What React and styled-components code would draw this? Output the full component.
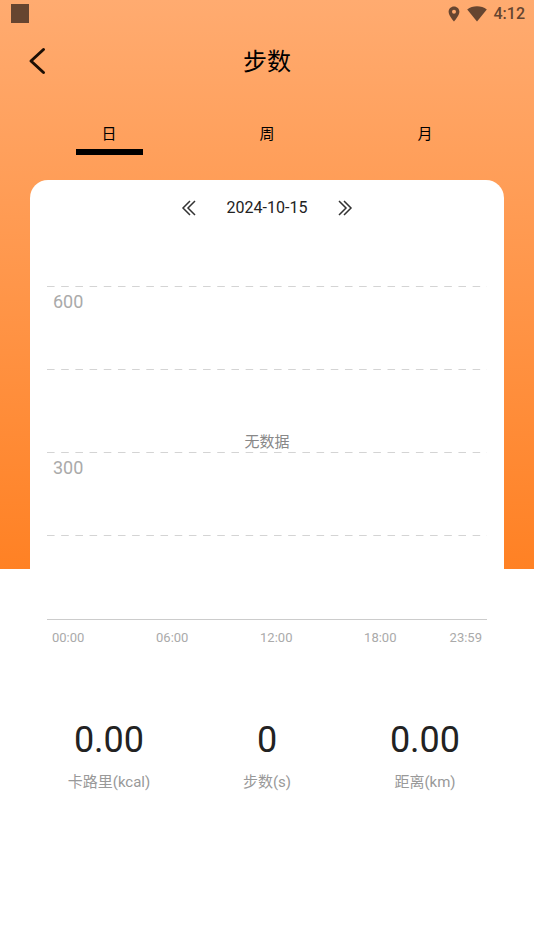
import React, { useState } from 'react'
import styled, { createGlobalStyle } from 'styled-components'

const tabs = ['日', '周', '月']
const gridRows = ['600', '', '300', '']
const hours = ['00:00', '06:00', '12:00', '18:00', '23:59']
const stats = [
  { value: '0.00', label: '卡路里(kcal)' },
  { value: '0', label: '步数(s)' },
  { value: '0.00', label: '距离(km)' },
]

const App = () => {
  const [active, setActive] = useState('日')

  return (
    <>
      <GlobalStyle />
      <Page>
        <StatusBar>
          <Notification />
          <StatusIcons>
            <svg width="12" height="16" viewBox="0 0 12 16">
              <path
                fillRule="evenodd"
                d="M6 0.5C2.9 0.5 0.6 2.8 0.6 5.8C0.6 9.7 6 15.5 6 15.5S11.4 9.7 11.4 5.8C11.4 2.8 9.1 0.5 6 0.5ZM6 3.8A2 2 0 1 1 6 7.8A2 2 0 1 1 6 3.8Z"
              />
            </svg>
            <svg width="20" height="16" viewBox="0 0 20 16">
              <path d="M10 15.5L0.2 3.5C3 1.4 6.3 0.3 10 0.3S17 1.4 19.8 3.5Z" />
            </svg>
            <span>4:12</span>
          </StatusIcons>
        </StatusBar>
        <Header>
          <BackButton aria-label="返回">
            <svg width="18" height="28" viewBox="0 0 18 28">
              <path d="M15.5 2.5L3 14L15.5 25.5" />
            </svg>
          </BackButton>
          <h1>步数</h1>
        </Header>
        <Tabs>
          {tabs.map(tab => (
            <Tab
              key={tab}
              $active={tab === active}
              onClick={() => setActive(tab)}
            >
              {tab}
            </Tab>
          ))}
        </Tabs>
        <Card>
          <DatePicker>
            <ArrowButton aria-label="前一天">
              <svg width="16" height="16" viewBox="0 0 16 16">
                <path d="M9 1L2 8L9 15M14 1L7 8L14 15" />
              </svg>
            </ArrowButton>
            <span>2024-10-15</span>
            <ArrowButton aria-label="后一天">
              <svg width="16" height="16" viewBox="0 0 16 16">
                <path d="M2 1L9 8L2 15M7 1L14 8L7 15" />
              </svg>
            </ArrowButton>
          </DatePicker>
          <Chart>
            {gridRows.map((label, index) => (
              <GridRow key={index}>{label}</GridRow>
            ))}
            <Empty>无数据</Empty>
          </Chart>
          <Hours>
            {hours.map(hour => (
              <span key={hour}>{hour}</span>
            ))}
          </Hours>
        </Card>
        <Stats>
          {stats.map(({ value, label }) => (
            <Stat key={label}>
              <dd>{value}</dd>
              <dt>{label}</dt>
            </Stat>
          ))}
        </Stats>
      </Page>
    </>
  )
}

const GlobalStyle = createGlobalStyle`
  * {
    box-sizing: border-box;
  }

  body {
    margin: 0;
    background: #ffffff;
    font-family: Roboto, 'Noto Sans CJK SC', sans-serif;
  }

  button {
    border: 0;
    padding: 0;
    background: none;
    font: inherit;
    cursor: pointer;
  }
`

const Page = styled.main`
  min-height: 100vh;
  background: linear-gradient(#ffab70, #ff8124) no-repeat;
  background-size: 100% 60vh;
`

const StatusBar = styled.div`
  display: flex;
  justify-content: space-between;
  align-items: center;
  height: 27px;
  padding: 0 9px 0 11px;
`

const Notification = styled.div`
  width: 18px;
  height: 19px;
  background: #664530;
`

const StatusIcons = styled.div`
  display: flex;
  align-items: center;
  gap: 7px;
  color: #664530;
  font-size: 16px;
  font-weight: 500;
  line-height: 20px;

  svg {
    fill: #664530;
  }
`

const Header = styled.header`
  display: grid;
  grid-template-columns: 30px 1fr 30px;
  align-items: center;
  height: 67px;
  padding: 0 28px;

  h1 {
    margin: 0;
    padding-top: 3px;
    font-size: 24px;
    font-weight: 400;
    line-height: 32px;
    text-align: center;
  }
`

const BackButton = styled.button`
  display: flex;

  svg {
    fill: none;
    stroke: #1c0f05;
    stroke-width: 3;
    stroke-linecap: round;
    stroke-linejoin: round;
  }
`

const Tabs = styled.nav`
  display: grid;
  grid-template-columns: repeat(3, 1fr);
  padding: 30px 30px 25px;
`

const Tab = styled.button`
  display: flex;
  flex-direction: column;
  align-items: center;
  gap: 5px;
  color: #000000;
  font-size: 15px;
  line-height: 20px;

  &::after {
    content: '';
    width: 67px;
    height: 6px;
    background: ${props => (props.$active ? '#000000' : 'transparent')};
  }
`

const Card = styled.section`
  margin: 0 30px;
  padding: 16px 17px 0;
  border-radius: 18px 18px 0 0;
  background: #ffffff;
`

const DatePicker = styled.div`
  display: flex;
  justify-content: center;
  align-items: center;
  gap: 30px;
  height: 24px;
  color: #222222;
  font-size: 16px;
  line-height: 24px;
`

const ArrowButton = styled.button`
  display: flex;

  svg {
    fill: none;
    stroke: #333333;
    stroke-width: 1.5;
  }
`

const Chart = styled.div`
  position: relative;
  margin-top: 66px;
  padding-bottom: 1px;
  border-bottom: 1px solid #cccccc;
`

const GridRow = styled.div`
  height: 83px;
  padding: 6px;
  background: linear-gradient(to right, #d4d4d4 55%, transparent 55%) top left;
  background-size: 14px 1px;
  background-repeat: round no-repeat;
  color: #aaaaaa;
  font-size: 18px;
  line-height: 20px;
`

const Empty = styled.p`
  position: absolute;
  top: 50%;
  left: 0;
  right: 0;
  margin: -23px 0 0;
  color: #888888;
  font-size: 15px;
  line-height: 24px;
  text-align: center;
`

const Hours = styled.div`
  display: grid;
  grid-template-columns: repeat(4, minmax(0, 30fr)) minmax(0, 4fr);
  padding: 8px 5px 0;
  color: #aaaaaa;
  font-size: 13px;
  line-height: 20px;

  span:last-child {
    justify-self: end;
  }
`

const Stats = styled.dl`
  display: grid;
  grid-template-columns: repeat(3, 1fr);
  margin: 0;
  padding: 72px 30px 0;
`

const Stat = styled.div`
  display: flex;
  flex-direction: column;
  align-items: center;

  dd {
    margin: 0;
    color: #222222;
    font-size: 36px;
    line-height: 40px;
  }

  dt {
    margin-top: 12px;
    color: #999999;
    font-size: 15px;
    line-height: 20px;
  }
`

export default App
